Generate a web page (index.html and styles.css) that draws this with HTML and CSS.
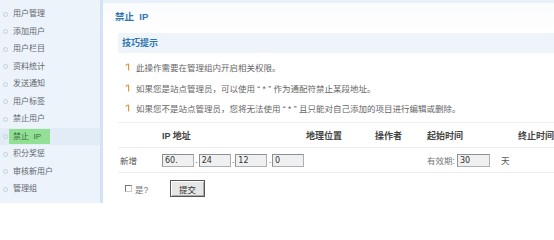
FILE: index.html
```html
<!DOCTYPE html>
<html lang="zh-CN">
<head>
<meta charset="utf-8">
<title>禁止 IP</title>
<link rel="stylesheet" href="styles.css">
</head>
<body>
<div class="page">
  <aside class="sidebar">
    <ul class="menu">
      <li class="menu-item">用户管理</li>
      <li class="menu-item">添加用户</li>
      <li class="menu-item">用户栏目</li>
      <li class="menu-item">资料统计</li>
      <li class="menu-item">发送通知</li>
      <li class="menu-item">用户标签</li>
      <li class="menu-item">禁止用户</li>
      <li class="menu-item active"><span class="menu-hl">禁止&nbsp;&nbsp;IP</span></li>
      <li class="menu-item">积分奖惩</li>
      <li class="menu-item">审核新用户</li>
      <li class="menu-item">管理组</li>
    </ul>
  </aside>
  <main class="main">
    <h1 class="title">禁止&nbsp;&nbsp;IP</h1>
    <section class="tips">
      <div class="tips-head">技巧提示</div>
      <ul class="tips-list">
        <li class="tip"><svg class="tip-icon" viewBox="0 0 6 8" width="6" height="8"><path d="M0.8 2.6 Q2 0.6 4 1.2 M3.6 1.2 V7.6" fill="none" stroke="#e0903a" stroke-width="1.1"/></svg>此操作需要在管理组内开启相关权限。</li>
        <li class="tip"><svg class="tip-icon" viewBox="0 0 6 8" width="6" height="8"><path d="M0.8 2.6 Q2 0.6 4 1.2 M3.6 1.2 V7.6" fill="none" stroke="#e0903a" stroke-width="1.1"/></svg>如果您是站点管理员，可以使用 “ * ” 作为通配符禁止某段地址。</li>
        <li class="tip"><svg class="tip-icon" viewBox="0 0 6 8" width="6" height="8"><path d="M0.8 2.6 Q2 0.6 4 1.2 M3.6 1.2 V7.6" fill="none" stroke="#e0903a" stroke-width="1.1"/></svg>如果您不是站点管理员，您将无法使用 “ * ” 且只能对自己添加的项目进行编辑或删除。</li>
      </ul>
    </section>
    <div class="grid">
      <div class="cell head"></div>
      <div class="cell head">IP 地址</div>
      <div class="cell head">地理位置</div>
      <div class="cell head">操作者</div>
      <div class="cell head">起始时间</div>
      <div class="cell head">终止时间</div>

      <div class="cell">新增</div>
      <div class="cell ip">
        <input class="field" type="text" value="60.">
        <span class="dot">.</span>
        <input class="field" type="text" value="24">
        <span class="dot">.</span>
        <input class="field" type="text" value="12">
        <span class="dot">.</span>
        <input class="field" type="text" value="0">
      </div>
      <div class="cell"></div>
      <div class="cell"></div>
      <div class="cell valid">有效期:<input class="field days" type="text" value="30"><span class="unit">天</span></div>
      <div class="cell"></div>
    </div>
    <div class="submit-row">
      <label class="check"><input class="box" type="checkbox">是?</label>
      <button class="btn" type="button">提交</button>
    </div>
  </main>
</div>
</body>
</html>
```

FILE: styles.css
```css
html, body {
  margin: 0;
  padding: 0;
  width: 554px;
  height: 203px;
  overflow: hidden;
  background: #ffffff;
  font-family: "Liberation Sans", "Noto Sans CJK SC", sans-serif;
  font-size: 8.5px;
  color: #555;
}

.page {
  display: flex;
  width: 554px;
  height: 203px;
  overflow: hidden;
}

.sidebar {
  flex: 0 0 100px;
  background: #edf3fa;
  border-right: 3px solid #d3e3f3;
}

.menu {
  list-style: none;
  margin: 0;
  padding: 5px 0 0 0;
}

.menu-item {
  position: relative;
  height: 17.5px;
  line-height: 17.5px;
  padding-left: 13px;
  color: #5e6670;
  font-size: 8px;
}

.menu-item::before {
  content: "";
  position: absolute;
  left: 3px;
  top: 6.5px;
  width: 3px;
  height: 3px;
  border: 1px solid #c3d0dd;
  border-radius: 50%;
}

.menu-item.active {
  background: #e2ecf7;
}

.menu-hl {
  display: inline-block;
  margin-left: -4px;
  padding: 0 4px;
  width: 33px;
  line-height: 15px;
  background: #92e094;
  color: #3d6a45;
}

.main {
  flex: 1 1 auto;
  min-width: 0;
  overflow: hidden;
  padding-left: 15px;
  border-top: 3px solid #e8f0f9;
  background: linear-gradient(#fafbfd, #ffffff 30px);
}

.title {
  margin: 0 0 0 -3px;
  height: 30px;
  line-height: 27px;
  font-size: 9.5px;
  font-weight: bold;
  color: #2f74b5;
}

.tips-head {
  height: 20px;
  line-height: 20px;
  padding-left: 4px;
  background: #eef4fa;
  font-size: 9px;
  font-weight: bold;
  color: #2f74b5;
}

.tips-list {
  list-style: none;
  margin: 0;
  padding: 4px 0 0 0;
}

.tip {
  display: flex;
  align-items: center;
  height: 20.5px;
  padding-left: 7px;
  color: #666;
  font-size: 8.5px;
  white-space: nowrap;
}

.tip-icon {
  flex: 0 0 auto;
  margin-right: 5px;
}

.grid {
  display: grid;
  grid-template-columns: 42px 144px 69px 52px 91px 100px;
  grid-auto-rows: 25px;
  width: 498px;
  margin-top: 3.5px;
  border-top: 1px solid #eeeeee;
}

.cell {
  display: flex;
  align-items: center;
  padding-left: 2px;
  border-bottom: 1px solid #eeeeee;
  white-space: nowrap;
  color: #555;
}

.cell.head {
  font-weight: bold;
  font-size: 9px;
  color: #444;
}

.field {
  box-sizing: border-box;
  width: 32px;
  height: 13px;
  margin: 0;
  padding: 0 2px;
  border: 1px solid #a9b0b8;
  border-top-color: #8a9098;
  border-left-color: #8a9098;
  background: #f0f0f0;
  font-family: "DejaVu Sans", sans-serif;
  font-size: 8px;
  color: #333;
  outline: none;
}

.dot {
  width: 10px;
  text-align: right;
  padding-right: 1px;
  box-sizing: border-box;
  color: #555;
}

.valid {
  color: #777;
}

.field.days {
  width: 33px;
  margin-left: 2px;
}

.unit {
  margin-left: 11px;
  color: #555;
}

.submit-row {
  display: flex;
  align-items: center;
  height: 17px;
  padding-top: 7px;
}

.check {
  display: flex;
  align-items: center;
  width: 45px;
  padding-left: 7px;
  color: #777;
}

.box {
  appearance: none;
  -webkit-appearance: none;
  box-sizing: border-box;
  width: 7px;
  height: 7px;
  margin: 0 3px 0 0;
  border: 1px solid #c8c8c8;
  border-top-color: #777;
  border-left-color: #777;
  background: #fff;
}

.btn {
  box-sizing: border-box;
  width: 35px;
  height: 17px;
  margin: 0;
  padding: 0;
  border: 1px solid #555;
  box-shadow: inset 1px 1px 0 #fff, inset -1px -1px 0 #aaa;
  background: #e6e6e6;
  font-family: "Liberation Sans", "Noto Sans CJK SC", sans-serif;
  font-size: 8.5px;
  color: #333;
}
```
